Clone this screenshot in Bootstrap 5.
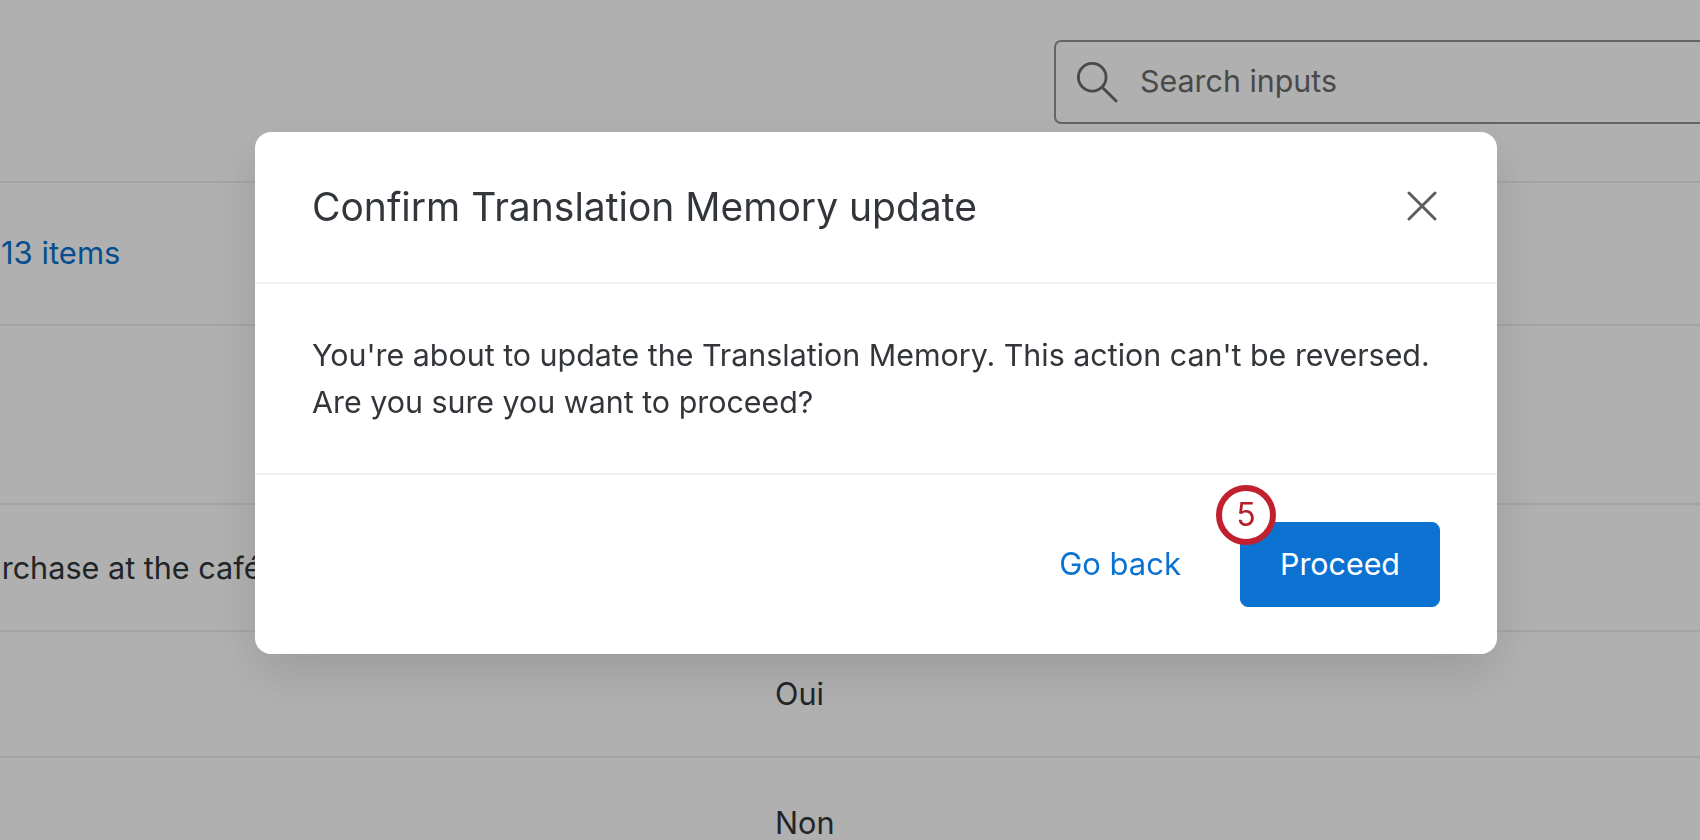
<!DOCTYPE html>
<html lang="en">
<head>
    <meta charset="UTF-8">
    <meta name="viewport" content="width=device-width, initial-scale=1.0">
    <title>Confirm Translation Memory update</title>
    <link href="https://cdn.jsdelivr.net/npm/bootstrap@5.3.0/dist/css/bootstrap.min.css" rel="stylesheet">
    <script src="https://cdn.jsdelivr.net/npm/bootstrap@5.3.0/dist/js/bootstrap.bundle.min.js"></script>
    <style>
        body { font-family: Inter, "Liberation Sans", sans-serif; color: #32363a; background: #fff; height: 840px; overflow: hidden; }
        .page-top { height: 183px; padding: 40px 0 0 1054px; border-bottom: 2px solid #eee; }
        .search-box { width: 800px; height: 84px; border: 2px solid #929292; border-radius: 7px; padding-left: 20px; gap: 22px; font-size: 30.4px; color: #6b6b6b; }
        .data-row { font-size: 30.6px; border-bottom: 2px solid #eee; white-space: nowrap; }
        .row-items { height: 143px; color: #0b72d2; font-size: 31px; }
        .row-items span { margin-left: 1px; }
        .row-empty { height: 179px; }
        .row-cafe { height: 127px; }
        .row-cafe span { margin-left: -36px; }
        .row-answer { height: 126px; padding-left: 775px; }
        .row-answer.row-last { height: 82px; border: 0; padding-top: 42px; }
        .modal-backdrop.show { opacity: .31; }
        .modal-dialog.confirm-dialog { max-width: 1242px; width: 1242px; margin: 132px 0 0 255px; }
        .confirm-dialog .modal-content { border: 0; border-radius: 16px; height: 522px; box-shadow: 0 20px 50px rgba(0, 0, 0, .12); }
        .confirm-dialog .modal-header { height: 152px; padding: 0 57px; border-bottom: 2px solid #f0f0f0; border-radius: 16px 16px 0 0; }
        .confirm-dialog .modal-title { font-size: 39px; line-height: 1.2; }
        .confirm-dialog .modal-body { height: 191px; flex: none; padding: 0 57px; font-size: 30.4px; line-height: 47px; border-bottom: 2px solid #f0f0f0; }
        .confirm-dialog .modal-footer { padding: 47px 57px 0 0; border: 0; gap: 59px; }
        .confirm-dialog .modal-footer > * { margin: 0; }
        .close-x { width: 30px; height: 30px; margin: 0 3px 2px 0; }
        .link-back { height: 85px; font-size: 31px; color: #0b72d2; padding: 0; border: 0; }
        .btn-proceed { width: 200px; height: 85px; padding: 0; font-size: 30.4px; border-radius: 8px; background: #0b72d2; border-color: #0b72d2; color: #fff; }
        .step-badge { width: 60px; height: 60px; top: -37px; left: -24px; border: 6px solid #c1202f; background: #fff; color: #b51d2b; font-size: 32px; line-height: 1; }
    </style>
</head>
<body>

    <div class="page-top">
        <div class="search-box d-flex align-items-center">
            <svg width="42" height="42" viewBox="0 0 44 44" fill="none" stroke="#6b6b6b" stroke-width="3" stroke-linecap="round">
                <circle cx="17" cy="17" r="14.5"/>
                <path d="M28 28l14 14"/>
            </svg>
            <span>Search inputs</span>
        </div>
    </div>
    <div class="data-row row-items d-flex align-items-center"><span>13 items</span></div>
    <div class="data-row row-empty"></div>
    <div class="data-row row-cafe d-flex align-items-center"><span>Purchase at the café</span></div>
    <div class="data-row row-answer d-flex align-items-center"><span>Oui</span></div>
    <div class="data-row row-answer row-last"><span>Non</span></div>

    <div class="modal-backdrop show"></div>
    <div class="modal d-block" tabindex="-1">
        <div class="modal-dialog confirm-dialog">
            <div class="modal-content">
                <div class="modal-header">
                    <h5 class="modal-title fw-normal">Confirm Translation Memory update</h5>
                    <button type="button" class="btn p-0 border-0 ms-auto lh-1" aria-label="Close">
                        <svg class="close-x" viewBox="0 0 30 30" fill="none" stroke="#5a5e62" stroke-width="3" stroke-linecap="round">
                            <path d="M2 2l26 26M28 2L2 28"/>
                        </svg>
                    </button>
                </div>
                <div class="modal-body d-flex flex-column justify-content-center">
                    <div>You're about to update the Translation Memory. This action can't be reversed.</div>
                    <div>Are you sure you want to proceed?</div>
                </div>
                <div class="modal-footer align-items-start">
                    <button type="button" class="btn btn-link text-decoration-none link-back">Go back</button>
                    <div class="position-relative">
                        <button type="button" class="btn btn-primary btn-proceed">Proceed</button>
                        <span class="step-badge position-absolute rounded-circle d-flex align-items-center justify-content-center">5</span>
                    </div>
                </div>
            </div>
        </div>
    </div>

</body>
</html>
